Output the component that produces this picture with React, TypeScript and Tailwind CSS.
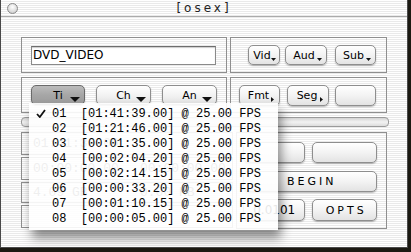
import type { ReactNode } from 'react';

const titles = [
  ['01', '01:41:39.00'],
  ['02', '01:21:46.00'],
  ['03', '00:01:35.00'],
  ['04', '00:02:04.20'],
  ['05', '00:02:14.15'],
  ['06', '00:00:33.20'],
  ['07', '00:01:10.15'],
  ['08', '00:00:05.00'],
];

const stripes =
  'bg-[repeating-linear-gradient(to_bottom,#ffffff_0px,#ffffff_1px,#eaeaea_1px,#eaeaea_2px)]';

function BigDown() {
  return (
    <svg width="10" height="5" viewBox="0 0 10 5" className="mb-[2px] shrink-0 self-end">
      <path d="M0 0H10L5 5Z" fill="#111" />
    </svg>
  );
}

function SmallDown() {
  return (
    <svg width="5" height="3" viewBox="0 0 5 3" className="mb-[3px] shrink-0 self-end">
      <path d="M0 0H5L2.5 3Z" fill="#111" />
    </svg>
  );
}

function SmallRight() {
  return (
    <svg width="3" height="5" viewBox="0 0 3 5" className="mb-[3px] shrink-0 self-end">
      <path d="M0 0L3 2.5L0 5Z" fill="#111" />
    </svg>
  );
}

function Btn({
  className = '',
  pressed = false,
  children,
}: {
  className?: string;
  pressed?: boolean;
  children?: ReactNode;
}) {
  return (
    <div
      className={`flex items-center rounded-[5px] border text-[11px] leading-none text-black shadow-[0_1px_1.5px_rgba(0,0,0,0.28)] ${
        pressed
          ? 'border-[#6a6a6a] bg-[linear-gradient(to_bottom,#bcbcbc,#a6a6a6_50%,#9c9c9c)]'
          : 'border-[#8e8e8e] bg-[linear-gradient(to_bottom,#ffffff,#f3f3f3_50%,#e3e3e3)]'
      } ${className}`}
    >
      {children}
    </div>
  );
}

export default function App() {
  return (
    <div className="h-[252px] w-[411px] overflow-hidden bg-[#1b1912] font-['DejaVu_Sans','Liberation_Sans',sans-serif]">
      <div className={`relative h-[248px] w-[408px] border-x border-b border-[#4a4a4a] ${stripes}`}>
        {/* title bar */}
        <div className="flex h-[17px] items-center border-b border-[#ababab]">
          <div className="ml-[6px] h-[11px] w-[11px] rounded-full border border-[#8a8a8a] bg-[radial-gradient(circle_at_50%_35%,#ffffff,#d6d6d6_70%,#bdbdbd)]" />
          <div className="flex-1 text-center text-[12px] leading-none tracking-[3px] text-[#222]">[osex]</div>
          <div className="w-[17px]" />
        </div>

        <div className="px-[20px] pt-[20px]">
          {/* row 1 */}
          <div className="flex h-[36px] gap-[3px]">
            <div className="flex w-[208px] items-center border border-[#8f8f8f] pl-[9px] pr-[10px]">
              <div className="flex h-[19px] flex-1 items-center border border-[#8a8a8a] border-t-[#6e6e6e] bg-white pl-[1px] text-[12px] leading-none text-black shadow-[inset_0_1px_1px_rgba(0,0,0,0.2)]">
                DVD_VIDEO
              </div>
            </div>
            <div className="flex w-[158px] items-center justify-end border border-[#8f8f8f] pr-[10px]">
              <Btn className="h-[20px] w-[32px] pl-[4px] pr-[3px]">
                <span className="flex-1 text-center">Vid</span>
                <SmallDown />
              </Btn>
              <Btn className="ml-[5px] h-[20px] w-[42px] pl-[5px] pr-[4px]">
                <span className="flex-1 text-center">Aud</span>
                <SmallDown />
              </Btn>
              <Btn className="ml-[8px] h-[20px] w-[41px] pl-[5px] pr-[4px]">
                <span className="flex-1 text-center">Sub</span>
                <SmallDown />
              </Btn>
            </div>
          </div>

          {/* row 2 */}
          <div className="mt-[4px] flex h-[36px] gap-[3px]">
            <div className="flex w-[208px] items-center gap-[11px] border border-[#8f8f8f] pl-[9px]">
              <Btn pressed className="h-[20px] w-[54px] pl-[14px] pr-[4px]">
                <span className="flex-1 text-center">Ti</span>
                <BigDown />
              </Btn>
              <Btn className="h-[20px] w-[55px] pl-[14px] pr-[4px]">
                <span className="flex-1 text-center">Ch</span>
                <BigDown />
              </Btn>
              <Btn className="h-[20px] w-[55px] pl-[14px] pr-[4px]">
                <span className="flex-1 text-center">An</span>
                <BigDown />
              </Btn>
            </div>
            <div className="flex w-[158px] items-center justify-end border border-[#8f8f8f] pr-[10px]">
              <Btn className="h-[21px] w-[41px] pl-[6px] pr-[5px]">
                <span className="flex-1 text-center">Fmt</span>
                <SmallRight />
              </Btn>
              <Btn className="ml-[7px] h-[21px] w-[42px] pl-[6px] pr-[5px]">
                <span className="flex-1 text-center">Seg</span>
                <SmallRight />
              </Btn>
              <Btn className="ml-[6px] h-[21px] w-[41px]" />
            </div>
          </div>

          {/* progress bar */}
          <div className="mt-[4px] h-[10px] w-[368px] rounded-[4px] border border-[#9a9a9a] bg-[linear-gradient(to_bottom,#d4d4d4,#f2f2f2_50%,#dcdcdc)]" />

          {/* row 3 */}
          <div className="mt-[5px] flex h-[97px] gap-[3px]">
            <div className="flex w-[214px] flex-col gap-[2px] font-['Liberation_Mono',monospace] text-[13px] leading-none text-[#555]">
              <div className="flex h-[23px] items-center border border-[#8f8f8f] pl-[11px]">01:41:39.00</div>
              <div className="flex h-[23px] items-center border border-[#8f8f8f] pl-[11px]">
                <span className="w-[107px]">00:00:00.00</span>
                <span>00:00:00.00</span>
              </div>
              <div className="flex h-[21px] items-center border border-[#8f8f8f] pl-[11px]">
                <span className="w-[107px]">4.09 GB</span>
                <span>0.00 KB</span>
              </div>
              <div className="h-[23px] border border-[#8f8f8f]" />
            </div>
            <div className="flex w-[152px] flex-col border border-[#8f8f8f] pl-[6px] pt-[9px]">
              <div className="flex gap-[7px]">
                <Btn className="h-[21px] w-[62px]" />
                <Btn className="h-[21px] w-[65px]" />
              </div>
              <Btn className="mt-[8px] h-[21px] w-[134px] justify-center text-[10px] tracking-[3px]">
                <span className="pl-[3px]">BEGIN</span>
              </Btn>
              <div className="mt-[7px] flex gap-[7px]">
                <Btn className="h-[22px] w-[62px] justify-center text-[12px]">0.0101</Btn>
                <Btn className="h-[22px] w-[65px] justify-center text-[10px] tracking-[3px]">
                  <span className="pl-[3px]">OPTS</span>
                </Btn>
              </div>
            </div>
          </div>
        </div>

        {/* title popup menu */}
        <div className="absolute left-[28px] top-[103px] h-[127px] w-[249px] bg-white/[0.9] pt-[3px] shadow-[3px_8px_10px_rgba(0,0,0,0.45)]">
          {titles.map(([n, t], i) => (
            <div key={n} className="flex h-[15px] items-center pl-[7px]">
              <div className="flex w-[10px] justify-center">
                {i === 0 && (
                  <svg width="10" height="9" viewBox="0 0 10 9">
                    <path d="M1 5L3.8 8L9 1" fill="none" stroke="#111" strokeWidth="1.8" />
                  </svg>
                )}
              </div>
              <span className="ml-[6px] whitespace-pre font-['Liberation_Mono',monospace] text-[12px] leading-none text-black">
                {`${n}  [${t}] @ 25.00 FPS`}
              </span>
            </div>
          ))}
        </div>
      </div>
    </div>
  );
}
